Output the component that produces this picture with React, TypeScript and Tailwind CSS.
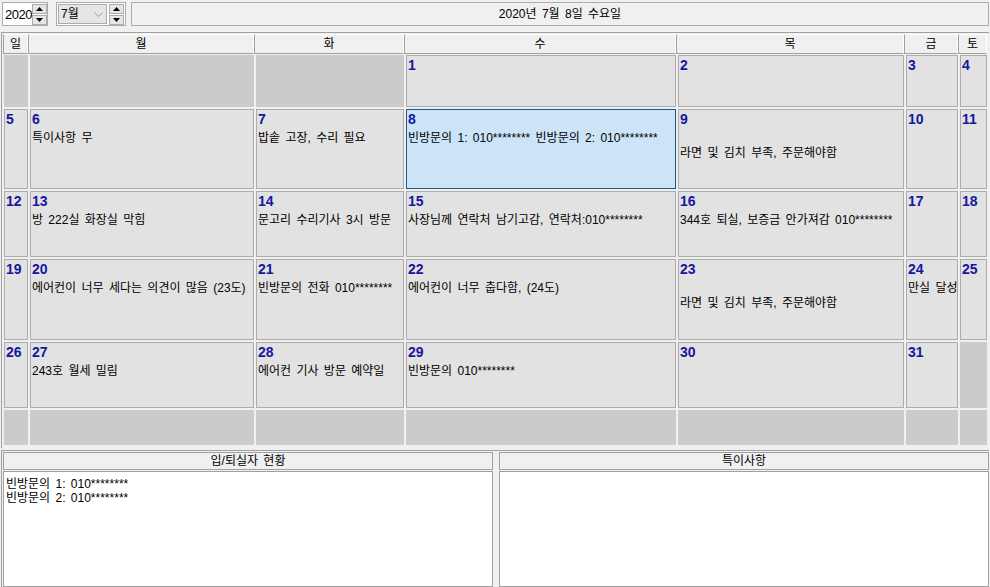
import React from "react";

type Cell = { day?: number; text?: string; lead?: boolean; selected?: boolean } | null;

const weeks: Cell[][] = [
  [null, null, null, { day: 1 }, { day: 2 }, { day: 3 }, { day: 4 }],
  [
    { day: 5 },
    { day: 6, text: "특이사항 무" },
    { day: 7, text: "밥솥 고장, 수리 필요" },
    { day: 8, text: "빈방문의 1: 010******** 빈방문의 2: 010********", selected: true },
    { day: 9, text: "라면 및 김치 부족, 주문해야함", lead: true },
    { day: 10 },
    { day: 11 },
  ],
  [
    { day: 12 },
    { day: 13, text: "방 222실 화장실 막힘" },
    { day: 14, text: "문고리 수리기사 3시 방문" },
    { day: 15, text: "사장님께 연락처 남기고감, 연락처:010********" },
    { day: 16, text: "344호 퇴실, 보증금 안가져감 010********" },
    { day: 17 },
    { day: 18 },
  ],
  [
    { day: 19 },
    { day: 20, text: "에어컨이 너무 세다는 의견이 많음 (23도)" },
    { day: 21, text: "빈방문의 전화 010********" },
    { day: 22, text: "에어컨이 너무 춥다함, (24도)" },
    { day: 23, text: "라면 및 김치 부족, 주문해야함", lead: true },
    { day: 24, text: "만실 달성" },
    { day: 25 },
  ],
  [
    { day: 26 },
    { day: 27, text: "243호 월세 밀림" },
    { day: 28, text: "에어컨 기사 방문 예약일" },
    { day: 29, text: "빈방문의 010********" },
    { day: 30 },
    { day: 31 },
    null,
  ],
  [null, null, null, null, null, null, null],
];

const days = ["일", "월", "화", "수", "목", "금", "토"];

function Spinner() {
  return (
    <div className="flex flex-col gap-[1px]">
      <div className="w-[15px] h-[10px] bg-[#e5e5e5] border border-[#acacac] flex items-center justify-center">
        <svg width="7" height="4" viewBox="0 0 7 4">
          <polygon points="3.5,0 7,4 0,4" fill="#000" />
        </svg>
      </div>
      <div className="w-[15px] h-[10px] bg-[#e5e5e5] border border-[#acacac] flex items-center justify-center">
        <svg width="7" height="4" viewBox="0 0 7 4">
          <polygon points="0,0 7,0 3.5,4" fill="#000" />
        </svg>
      </div>
    </div>
  );
}

function DayCell({ cell }: { cell: Cell }) {
  if (!cell) {
    return <div className="bg-[#cbcbcb]" />;
  }
  return (
    <div
      className={`border overflow-hidden px-[1px] pt-[1px] ${
        cell.selected ? "bg-[#cce4f7] border-[#26577f]" : "bg-[#e2e2e2] border-[#acacac]"
      }`}
    >
      <div className="text-[14px] font-bold leading-[16px] text-[#1616a0] font-['Liberation_Sans',sans-serif]">
        {cell.day}
      </div>
      {cell.text && (
        <div className={`text-[12px] leading-[15px] text-black whitespace-nowrap ${cell.lead ? "mt-[19px]" : "mt-[4px]"}`}>
          {cell.text}
        </div>
      )}
    </div>
  );
}

export default function App() {
  return (
    <div className="w-[990px] h-[587px] bg-[#f0f0f0] overflow-hidden font-['Liberation_Sans','Noto_Sans_CJK_KR',sans-serif] text-[12px] text-black [word-spacing:2px]">
      {/* top bar */}
      <div className="flex items-start pt-[2px] pl-[2px] h-[26px]">
        <div className="w-[46px] h-[24px] bg-white border border-[#acacac] flex items-center justify-between pl-[2px] pr-[1px]">
          <span className="leading-none text-[13px] tracking-[-0.5px]">2020</span>
          <Spinner />
        </div>
        <div className="ml-[8px] w-[70px] h-[24px] bg-white border border-[#acacac] flex items-center pl-[1px] pr-[1px] gap-[2px]">
          <div className="w-[50px] h-[20px] bg-[#e5e5e5] border border-[#acacac] flex items-center justify-between pl-[2px] pr-[3px]">
            <span className="leading-none">7월</span>
            <svg width="9" height="5" viewBox="0 0 9 5">
              <polyline points="0.5,0.5 4.5,4.5 8.5,0.5" fill="none" stroke="#9a9a9a" strokeWidth="1" />
            </svg>
          </div>
          <Spinner />
        </div>
        <div className="ml-[5px] w-[858px] h-[24px] border border-[#acacac] bg-[#f0f0f0] flex items-center justify-center">
          2020년 7월 8일 수요일
        </div>
      </div>

      {/* calendar */}
      <div className="mt-[6px] ml-[1px] w-[988px] h-[416px] border-l border-t border-[#a0a0a0] pl-[1px] pt-[1px]">
        <div className="grid grid-cols-[25px_226px_150px_272px_228px_54px_29px] h-[20px]">
          {days.map((d) => (
            <div
              key={d}
              className="bg-[#f0f0f0] border-l border-l-[#a0a0a0] border-r border-r-white border-t border-t-white border-b border-b-[#a0a0a0] flex items-center justify-center leading-none"
            >
              {d}
            </div>
          ))}
        </div>
        <div className="mt-[1px] pl-[1px] grid grid-cols-[24px_224px_148px_270px_226px_52px_27px] grid-rows-[52px_80px_66px_81px_66px_35px] gap-[2px]">
          {weeks.map((w, i) => w.map((c, j) => <DayCell key={`${i}-${j}`} cell={c} />))}
        </div>
      </div>

      {/* bottom panels */}
      <div className="mt-[2px] ml-[1px] w-[988px] h-[137px] border-l border-t border-[#a0a0a0] flex gap-[6px] pl-[1px] pt-[1px]">
        <div className="w-[490px] flex flex-col gap-[1px]">
          <div className="h-[18px] bg-[#f0f0f0] border border-[#a0a0a0] flex items-center justify-center leading-none">
            입/퇴실자 현황
          </div>
          <div className="flex-1 bg-white border border-[#a0a0a0] px-[2px] pt-[5px] leading-[14px]">
            <div>빈방문의 1: 010********</div>
            <div>빈방문의 2: 010********</div>
          </div>
        </div>
        <div className="w-[490px] flex flex-col gap-[1px]">
          <div className="h-[18px] bg-[#f0f0f0] border border-[#a0a0a0] flex items-center justify-center leading-none">
            특이사항
          </div>
          <div className="flex-1 bg-white border border-[#a0a0a0]" />
        </div>
      </div>
    </div>
  );
}
